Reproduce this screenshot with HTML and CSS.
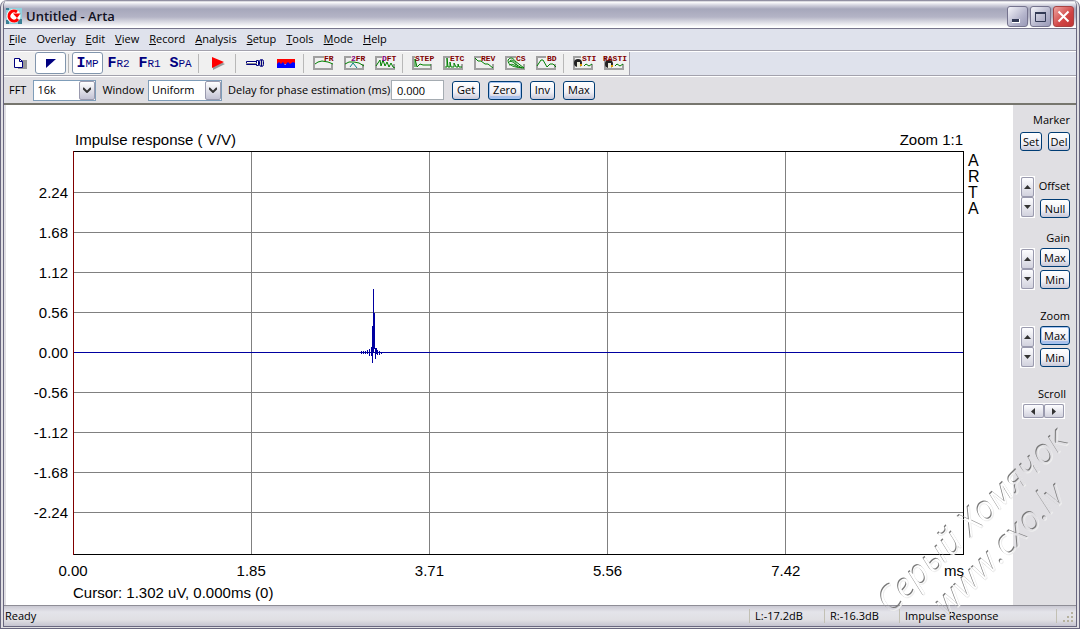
FILE: index.html
```html
<!DOCTYPE html>
<html lang="en">
<head>
    <meta charset="UTF-8">
    <meta name="viewport" content="width=device-width, initial-scale=1.0">
    <title>Untitled - Arta</title>
    <link rel="stylesheet" href="styles.css">
</head>
<body>
    <div class="window">
        <header class="titlebar">
            <svg class="logo" width="16" height="16" viewBox="0 0 16 16">
                <rect width="16" height="16" fill="#8fd0dc"/>
                <path d="M0 0h3v2H0zM12 11h4v5h-4zM0 12h3v4H0z" fill="#3c7f94"/>
                <circle cx="7.500" cy="8" r="7" fill="#fff"/>
                <path d="M11 4A5 5 0 1 0 12 11" fill="none" stroke="#f00" stroke-width="3"/>
                <path d="M7 5.500h7.500L11 10z" fill="#f00"/>
            </svg>
            <h1>Untitled - Arta</h1>
            <div class="caption-buttons">
                <button aria-label="Minimize"><svg width="19" height="19"><path d="M4 12h8v4H4z" fill="#fff"/><path d="M4 12h7v3H4z" fill="#333a55"/></svg></button>
                <button aria-label="Maximize"><svg width="19" height="19"><path d="M4.500 5.500h10v9h-10z" fill="none" stroke="#333a55"/><path d="M4 5h11v2H4z" fill="#333a55"/></svg></button>
                <button class="close" aria-label="Close"><svg width="19" height="19"><path d="M4.500 4.500l10 10M14.500 4.500l-10 10" stroke="#fff" stroke-width="2"/></svg></button>
            </div>
        </header>

        <nav class="menu">
            <button><u>F</u>ile</button>
            <button>Overlay</button>
            <button><u>E</u>dit</button>
            <button><u>V</u>iew</button>
            <button><u>R</u>ecord</button>
            <button><u>A</u>nalysis</button>
            <button><u>S</u>etup</button>
            <button><u>T</u>ools</button>
            <button><u>M</u>ode</button>
            <button><u>H</u>elp</button>
        </nav>

        <div class="toolbar">
            <button aria-label="New"><svg width="16" height="14"><path d="M6 4h9v9H6z" fill="#999"/><path d="M2.500 2.500h5l3 3v6h-8z" fill="#fff" stroke="#000080"/><path d="M7.500 2.500v3h3" fill="none" stroke="#000080"/></svg></button>
            <button class="active" aria-label="Invert"><svg width="12" height="12"><path d="M1 2h10L1 11z" fill="#000080"/></svg></button>
            <span class="sep"></span>
            <button class="mode active">I<small>MP</small></button>
            <button class="mode">F<small>R2</small></button>
            <button class="mode">F<small>R1</small></button>
            <button class="mode">S<small>PA</small></button>
            <span class="sep"></span>
            <button aria-label="Start"><svg width="14" height="14"><path d="M2 3v11l12-6z" fill="#999"/><path d="M1 1v11l12-6z" fill="#f00"/></svg></button>
            <span class="sep"></span>
            <button aria-label="Generator"><svg width="20" height="10"><path d="M1.500 3.500h10v3h-10zM11.500 2.500h2v5h-2z" fill="#fff" stroke="#000080"/><path d="M1 5.500h11" stroke="#888"/><rect x="14.500" y="1.500" width="4" height="7" rx="2" fill="#ccc" stroke="#000080"/><path d="M16.500 2v6" stroke="#000080"/></svg></button>
            <button aria-label="Spectrum"><svg width="18" height="10"><path d="M0 1h18v5H0z" fill="#f00"/><path d="M0 6l2-2 2 2 2-2 2 3 3-3 2 2 3-2 2 1v5H0z" fill="#00f"/></svg></button>
            <span class="sep"></span>
            <button aria-label="FR"><svg width="22" height="16"><path class="frame" d="M12 2H2v12h18V9"/><path class="trace" d="M3 9l3-2 4-1 6 1 5 2"/><text x="12" y="6">FR</text></svg></button>
            <button aria-label="2FR"><svg width="22" height="16"><path class="frame" d="M8 2H2v12h18V9"/><path class="trace" d="M2 9l4-2 5 0 5 1 5 3"/><path class="trace teal" d="M7 12l3-4M10 8l4 5"/><text x="8" y="6"><tspan class="purple">2</tspan>FR</text></svg></button>
            <button aria-label="DFT"><svg width="22" height="16"><path class="frame" d="M8 2H2v12h18V9"/><path class="trace" d="M2 11l2-3 2-3 1 6 2-6 2 6 2-4 2 5 2-4 2 4 2 1"/><text x="8" y="6"><tspan class="purple">D</tspan>FT</text></svg></button>
            <span class="sep"></span>
            <button aria-label="STEP"><svg width="22" height="16"><path class="frame" d="M4 2H2v12h18V9"/><path class="trace" d="M4 12V4l2 8 3-3 3 1h8"/><text x="4" y="6">STEP</text></svg></button>
            <button aria-label="ETC"><svg width="22" height="16"><path class="frame" d="M8 2H2v12h18V9"/><path class="trace" d="M3 12h2V3l1 9h2V7l1 5h3V8l2 4h2V9l1 3h3"/><text x="8" y="6">ETC</text></svg></button>
            <button aria-label="REV"><svg width="22" height="16"><path class="frame" d="M8 2H2v12h18V9"/><path class="trace" d="M2 3l3 3h3l4 3h3l5 4"/><text x="8" y="6">REV</text></svg></button>
            <button aria-label="CS"><svg width="22" height="16"><path class="frame" d="M12 2H2v12h18V9"/><path class="trace" d="M4 5c3-4 6-1 7 1l9 7-8-1c-5-1-8-3-8-7zM4 8c2-3 6-1 7 1l7 4M6 6c3-3 5 2 8 5M5 10c4-2 6 1 9 2"/><text x="12" y="6">CS</text></svg></button>
            <button aria-label="BD"><svg width="22" height="16"><path class="frame" d="M11 2H2v12h18V9"/><path class="trace" d="M2 11l4-6h2l4 7 3-3h3l3 3"/><text x="12" y="6">BD</text></svg></button>
            <span class="sep"></span>
            <button aria-label="STI"><svg width="22" height="16"><path class="frame" d="M9 2H2v12h18V9"/><circle class="hair" cx="6" cy="8" r="4"/><path class="face" d="M5 7h3v5H5z"/><path class="mouth" d="M8 9h2v2H8z"/><path class="trace" d="M12 11l2-2 3 2 3-2"/><text x="10" y="6">STI</text></svg></button>
            <button aria-label="RASTI"><svg width="22" height="16"><path class="frame" d="M4 2H2v12h18V9"/><circle class="hair" cx="6" cy="9" r="4"/><path class="face" d="M5 8h3v5H5z"/><path class="mouth" d="M8 10h2v2H8z"/><path class="trace" d="M12 11l2-2 3 2 3-2"/><text x="0" y="6">RASTI</text></svg></button>
            <span class="toolbar-rest"></span>
        </div>

        <form class="options">
            <label for="fft">FFT</label>
            <span class="combo fft">
                <select id="fft"><option>16k</option></select>
                <span class="arrow"><svg width="8" height="6"><path d="M0 1l4 4 4-4" /></svg></span>
            </span>
            <label for="win">Window</label>
            <span class="combo win">
                <select id="win"><option>Uniform</option></select>
                <span class="arrow"><svg width="8" height="6"><path d="M0 1l4 4 4-4" /></svg></span>
            </span>
            <label for="delay" class="delay-label">Delay for phase estimation (ms)</label>
            <input type="text" id="delay" value="0.000">
            <button type="button" class="btn">Get</button>
            <button type="button" class="btn default">Zero</button>
            <button type="button" class="btn">Inv</button>
            <button type="button" class="btn">Max</button>
        </form>

        <div class="content">
            <main class="plot">
                <div class="plot-title"><span>Impulse response ( V/V)</span><span>Zoom 1:1</span></div>
                <div class="y-axis">
                    <span>2.24</span><span>1.68</span><span>1.12</span><span>0.56</span><span>0.00</span>
                    <span>-0.56</span><span>-1.12</span><span>-1.68</span><span>-2.24</span>
                </div>
                <svg class="chart" viewBox="0 0 891 404" preserveAspectRatio="none">
                    <path class="grid" d="M178.500 0V404M356.500 0V404M534.500 0V404M712.500 0V404"/>
                    <path class="grid" d="M0 41.500H891M0 81.500H891M0 121.500H891M0 161.500H891M0 201.500H891M0 241.500H891M0 281.500H891M0 321.500H891M0 361.500H891"/>
                    <path class="border" d="M0 .5H890.500V403.500H0"/>
                    <path class="left" d="M.5 0V404"/>
                    <path class="signal" d="M1 201.500H890M288.500 200v3M290.500 200v3M292.500 200v3M294.500 199v4M296.500 198v7M298.500 196v9M299.500 175v37M300.500 138v64M301.500 162v36M302.500 197v11M303.500 197v6M304.500 199v5M306.500 200v4M308.500 201v2"/>
                </svg>
                <div class="brand">A<br>R<br>T<br>A</div>
                <div class="x-axis">
                    <div><span class="tick">0.00</span></div>
                    <div><span class="tick">1.85</span></div>
                    <div><span class="tick">3.71</span></div>
                    <div><span class="tick">5.56</span></div>
                    <div><span class="tick">7.42</span><span>ms</span></div>
                </div>
                <div class="cursor-info">Cursor: 1.302 uV, 0.000ms (0)</div>
            </main>

            <aside class="side">
                <section class="group">
                    <h2>Marker</h2>
                    <div class="pair"><button class="btn">Set</button><button class="btn">Del</button></div>
                </section>
                <section class="group offset">
                    <div class="spin"><button aria-label="Offset up"><svg width="7" height="4"><path d="M0 4l3.500-4L7 4z"/></svg></button><button aria-label="Offset down"><svg width="7" height="4"><path d="M0 0l3.500 4L7 0z"/></svg></button></div>
                    <div class="stack"><h2>Offset</h2><button class="btn">Null</button></div>
                </section>
                <section class="group gain">
                    <h2>Gain</h2>
                    <div class="row">
                        <div class="spin"><button aria-label="Gain up"><svg width="7" height="4"><path d="M0 4l3.500-4L7 4z"/></svg></button><button aria-label="Gain down"><svg width="7" height="4"><path d="M0 0l3.500 4L7 0z"/></svg></button></div>
                        <div class="stack"><button class="btn">Max</button><button class="btn">Min</button></div>
                    </div>
                </section>
                <section class="group">
                    <h2>Zoom</h2>
                    <div class="row">
                        <div class="spin"><button aria-label="Zoom up"><svg width="7" height="4"><path d="M0 4l3.500-4L7 4z"/></svg></button><button aria-label="Zoom down"><svg width="7" height="4"><path d="M0 0l3.500 4L7 0z"/></svg></button></div>
                        <div class="stack"><button class="btn default">Max</button><button class="btn">Min</button></div>
                    </div>
                </section>
                <section class="group scroll">
                    <h2>Scroll</h2>
                    <div class="spin flat"><button aria-label="Scroll left"><svg width="4" height="7"><path d="M4 0L0 3.500 4 7z"/></svg></button><button aria-label="Scroll right"><svg width="4" height="7"><path d="M0 0l4 3.500L0 7z"/></svg></button></div>
                </section>
            </aside>
        </div>

        <footer class="status">
            <span class="ready">Ready</span>
            <span class="cell">L:-17.2dB</span>
            <span class="cell">R:-16.3dB</span>
            <span class="cell wide">Impulse Response</span>
            <svg class="grip" width="12" height="12"><path d="M8 0h2v2H8zM4 4h2v2H4zM8 4h2v2H8zM0 8h2v2H0zM4 8h2v2H4zM8 8h2v2H8z" fill="#b5b19f"/></svg>
        </footer>

        <svg class="watermark" width="220" height="230">
            <defs>
                <filter id="emboss">
                    <feOffset in="SourceAlpha" dx="1" dy="1" result="low"/>
                    <feComposite in="SourceAlpha" in2="low" operator="out" result="edge"/>
                    <feFlood flood-color="#777"/>
                    <feComposite in2="edge" operator="in" result="dark"/>
                    <feComposite in="low" in2="SourceAlpha" operator="out" result="under"/>
                    <feFlood flood-color="#eee"/>
                    <feComposite in2="under" operator="in" result="light"/>
                    <feMerge><feMergeNode in="light"/><feMergeNode in="dark"/></feMerge>
                </filter>
            </defs>
            <g filter="url(#emboss)">
                <text transform="translate(30 216) rotate(-44)">Серый Хомячок</text>
                <text transform="translate(87 218) rotate(-45)">www.cxo.lv</text>
            </g>
        </svg>
    </div>
</body>
</html>
```
FILE: styles.css
```css
* {
    box-sizing: border-box;
}
body {
    margin: 0;
    font-family: "Open Sans", sans-serif;
    font-size: 11px;
    line-height: 14px;
    color: #000;
}
button, input, select {
    font: inherit;
    color: inherit;
    margin: 0;
    padding: 0;
}
button {
    display: flex;
    align-items: center;
    justify-content: center;
    border: none;
    background: none;
    white-space: nowrap;
}
h1, h2 {
    margin: 0;
    font-size: 11px;
    font-weight: normal;
}
.window {
    position: relative;
    display: flex;
    flex-direction: column;
    min-height: 100vh;
    border: double #69677f;
    border-width: 0 4px 3px 4px;
    border-radius: 7px 7px 0 0;
    background: #e0dfe3;
    overflow: hidden;
}

/* title bar */
.titlebar {
    display: flex;
    align-items: center;
    height: 29px;
    padding: 4px 2px 0 2px;
    border-bottom: 1px solid #77758c;
    background: linear-gradient(#6d6b83 0, #fff 2px, #d5d5e0 5px, #a6a7bb 9px, #b4b4c6 17px, #fff 27px);
}
.titlebar h1 {
    flex: 1;
    margin-left: 4px;
    font-size: 13px;
    font-weight: 600;
    color: #111122;
}
.caption-buttons {
    display: flex;
    gap: 2px;
}
.caption-buttons button {
    width: 21px;
    height: 21px;
    border: 1px solid #75738e;
    border-radius: 3px;
    background: linear-gradient(135deg, #f4f4f9, #b5b5cc 60%, #9a9ab8);
}
.caption-buttons .close {
    border-color: #a94343;
    background: linear-gradient(135deg, #eda3a0, #d04343 60%, #c03535);
}

/* menu and toolbars */
.menu {
    display: flex;
    gap: 10px;
    height: 22px;
    padding: 0 0 1px 5px;
    border-bottom: 1px solid #a3a2ad;
    background: #dfe2ec;
}
.toolbar {
    display: flex;
    height: 25px;
    border-top: 1px solid #fff;
    border-bottom: 1px solid #a3a2ad;
    background: #f0f0f0;
}
.toolbar button {
    width: 31px;
    height: 22px;
    border: 1px solid transparent;
    border-radius: 3px;
}
.toolbar .active {
    border-color: #8296ad;
    background: #fff;
}
.toolbar .mode {
    font-family: "Liberation Mono", monospace;
    font-size: 15px;
    font-weight: bold;
    color: #000080;
    align-items: baseline;
    line-height: 22px;
}
.mode small {
    font-size: 11px;
    font-weight: normal;
}
.toolbar text {
    font-family: "Liberation Mono", monospace;
    font-size: 8px;
    font-weight: bold;
    fill: #800000;
}
.toolbar .purple {
    fill: #800080;
}
.toolbar svg {
    overflow: visible;
}
.sep {
    width: 6px;
    height: 19px;
    margin-top: 2px;
    background: linear-gradient(90deg, transparent 2px, #b8b8b8 2px, #b8b8b8 3px, transparent 3px);
}
.toolbar-rest {
    flex: 1;
    border-left: 1px solid #a3a2ad;
    background: #dfe2ec;
}
.frame {
    fill: none;
    stroke: #a0a0a0;
    stroke-width: 2;
}
.trace {
    fill: none;
    stroke: #008000;
}
.teal {
    stroke: #008080;
}
.hair {
    fill: #222;
}
.face {
    fill: #eed;
}
.mouth {
    fill: #d90;
}
.options {
    display: flex;
    align-items: center;
    height: 27px;
    padding-left: 5px;
    border-top: 1px solid #fff;
}
.options label {
    white-space: nowrap;
}
.combo {
    position: relative;
    height: 21px;
    margin: 0 6px 0 7px;
}
.combo select {
    width: 100%;
    height: 100%;
    padding-left: 3px;
    border: 1px solid #7f9db9;
    border-radius: 0;
    background: #fff;
    appearance: none;
}
.fft {
    width: 63px;
}
.combo.win {
    width: 74px;
    margin: 0 6px 0 4px;
}
.arrow {
    position: absolute;
    top: 1px;
    right: 1px;
    bottom: 1px;
    display: flex;
    align-items: center;
    justify-content: center;
    width: 16px;
    border: 1px solid #9a9aae;
    border-radius: 2px;
    background: linear-gradient(#fff, #c3c3d4);
    pointer-events: none;
}
.arrow path {
    fill: none;
    stroke: #333;
    stroke-width: 2;
}
.delay-label {
    width: 163px;
}
.options input {
    width: 53px;
    height: 20px;
    padding-left: 5px;
    border: 1px solid #a5acb2;
    background: #fff;
}
.btn {
    height: 19px;
    padding: 0 4px;
    border: 1px solid #003c74;
    border-radius: 3px;
    background: linear-gradient(#fff, #f0f0f6 60%, #c8c8d8);
}
.btn.default {
    box-shadow: inset 0 0 0 1px #a5c3f0, inset 0 -2px 0 1px #a9c0ea;
}
.options .btn {
    margin-left: 8px;
}

/* plot area */
.content {
    flex: 1;
    display: flex;
    border-top: 2px solid #77766e;
    min-height: 300px;
}
.plot {
    flex: 1;
    display: grid;
    grid-template-columns: 67px 1fr 49px;
    grid-template-rows: 46px 1fr 50px;
    margin-left: 2px;
    background: #fff;
    font-family: "Liberation Sans", sans-serif;
    font-size: 15px;
    line-height: 16px;
}
.plot-title {
    grid-column: 2;
    display: flex;
    justify-content: space-between;
    align-items: flex-end;
    padding: 0 1px 3px 2px;
}
.y-axis {
    grid-row: 2;
    grid-column: 1;
    display: flex;
    flex-direction: column;
    padding: 22px 5px 22px 0;
    text-align: right;
}
.y-axis span {
    flex: 1;
    display: flex;
    align-items: center;
    justify-content: flex-end;
}
.chart {
    grid-row: 2;
    grid-column: 2;
    width: 100%;
    height: 100%;
    min-height: 0;
}
.chart path {
    fill: none;
    vector-effect: non-scaling-stroke;
    shape-rendering: crispEdges;
}
.chart .grid {
    stroke: #808080;
}
.chart .border {
    stroke: #000;
}
.chart .left {
    stroke: #800000;
}
.chart .signal {
    stroke: #0000a0;
}
.brand {
    grid-row: 2;
    grid-column: 3;
    padding: 2px 0 0 4px;
    font-size: 16px;
}
.x-axis {
    grid-row: 3;
    grid-column: 2;
    display: grid;
    grid-template-columns: repeat(5, 1fr);
    padding-top: 8px;
}
.x-axis div {
    display: flex;
    justify-content: space-between;
}
.tick {
    display: flex;
    justify-content: center;
    width: 0;
}
.cursor-info {
    grid-row: 3;
    grid-column: 2;
    align-self: end;
    padding-bottom: 4px;
}

/* right panel */
.side {
    width: 63px;
    padding: 8px 6px 0 7px;
    text-align: right;
}
.group {
    margin-bottom: 19px;
}
.pair {
    display: flex;
    justify-content: space-between;
    margin-top: 5px;
}
.pair .btn {
    width: 22px;
}
.side .btn {
    padding: 0;
}
.offset {
    display: flex;
    justify-content: space-between;
    margin-top: 25px;
    margin-bottom: 13px;
}
.offset .stack {
    padding-top: 3px;
    justify-content: space-between;
}
.row {
    display: flex;
    justify-content: space-between;
    margin-top: 3px;
}
.stack {
    display: flex;
    flex-direction: column;
    align-items: flex-end;
    gap: 3px;
}
.stack .btn {
    width: 30px;
}
.spin {
    display: flex;
    flex-direction: column;
    width: 15px;
    height: 42px;
    border: 1px solid #fff;
}
.spin button {
    flex: 1;
    border: 1px solid #9a9aae;
    border-radius: 2px;
    background: linear-gradient(#fdfdff, #d2d2de);
}
.spin path {
    fill: #333;
}
.spin.flat {
    flex-direction: row;
    width: 43px;
    height: 16px;
    margin: 2px 5px 0 auto;
}
.scroll h2 {
    margin-right: 4px;
}

/* status bar */
.status {
    display: flex;
    align-items: center;
    height: 21px;
    padding-left: 1px;
    border-top: 1px solid #8e8d96;
    background: linear-gradient(#c9c8d2, #e4e4ea 6px, #e0dfe3 14px, #c5c4d0);
}
.ready {
    flex: 1;
}
.cell {
    width: 75px;
    padding-left: 5px;
    border-left: 1px solid #c2c0b4;
}
.cell.wide {
    width: 158px;
    border-right: 1px solid #c2c0b4;
}
.grip {
    margin: 4px 1px 0 6px;
}
.watermark {
    position: absolute;
    right: -4px;
    bottom: -3px;
    pointer-events: none;
    font-size: 35px;
    font-style: italic;
}
```
